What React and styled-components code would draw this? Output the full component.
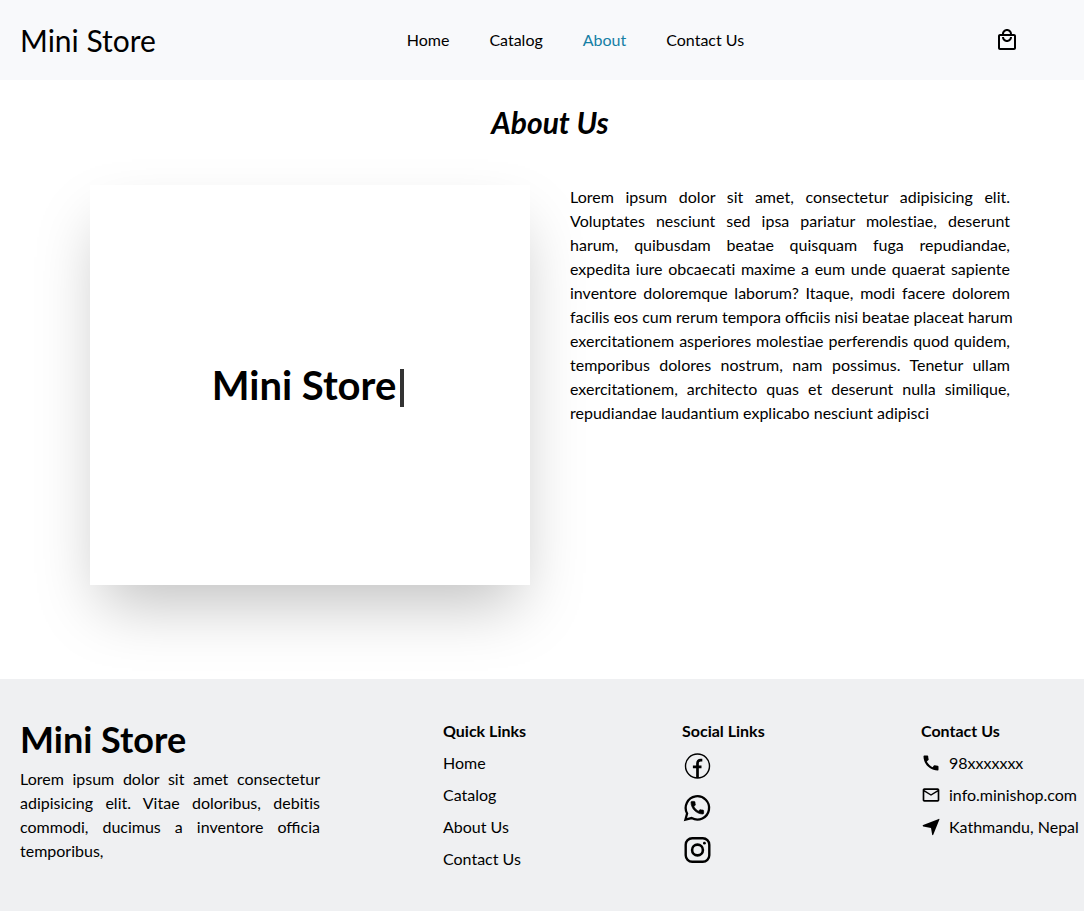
import React from "react";
import styled, { createGlobalStyle } from "styled-components";
import { MdCall, MdMailOutline, MdOutlineLocalMall } from "react-icons/md";

const GlobalStyle = createGlobalStyle`
  * { box-sizing: border-box; margin: 0; padding: 0; }
  body {
    background: #fff;
    color: #000;
    font: 400 16px/24px Lato, "Liberation Sans", sans-serif;
    overflow-x: hidden;
  }
  ul { list-style: none; }
`;

const Page = styled.div`
  display: flex;
  flex-direction: column;
  min-height: 100vh;
`;

const Header = styled.header`
  display: flex;
  align-items: center;
  justify-content: space-between;
  height: 80px;
  padding: 0 20px;
  background: #f8f9fb;
`;

const Brand = styled.a`
  color: inherit;
  font-size: 30px;
  line-height: 40px;
  text-decoration: none;
`;

const Nav = styled.nav`
  display: flex;
  gap: 40px;
`;

const TextLink = styled.a`
  color: ${({ $active }) => ($active ? "#1580a5" : "inherit")};
  text-decoration: none;
`;

const CartButton = styled.button`
  display: flex;
  margin-right: 45px;
  border: 0;
  background: none;
  color: inherit;
  font-size: 24px;
  cursor: pointer;
`;

const Main = styled.main`
  flex: 1;
  padding: 24px 74px 94px 90px;
`;

const Title = styled.h1`
  font-size: 30px;
  font-style: italic;
  font-weight: 700;
  line-height: 36px;
  text-align: center;
`;

const About = styled.section`
  display: grid;
  grid-template-columns: minmax(0, 1fr) minmax(0, 1fr);
  gap: 40px;
  margin-top: 45px;
`;

const Card = styled.div`
  display: flex;
  align-items: center;
  justify-content: center;
  min-height: 400px;
  background: #fff;
  box-shadow: 0 30px 60px -12px rgba(0, 0, 0, 0.25);
`;

const Typed = styled.h2`
  display: flex;
  align-items: center;
  gap: 4px;
  font-size: 40px;
  font-weight: 700;
  line-height: 48px;
`;

const Caret = styled.span`
  width: 4px;
  height: 38px;
  margin: 6px 4px 0 0;
  background: #333;
`;

const Copy = styled.p`
  text-align: justify;
`;

const Line = styled.span`
  display: block;
  font-variant-ligatures: ${({ $joined }) => ($joined ? "common-ligatures" : "no-common-ligatures")};
  text-align-last: justify;
  white-space: nowrap;

  &:last-child { text-align-last: left; }
`;

const Footer = styled.footer`
  display: grid;
  grid-template-columns: 423fr 239fr 239fr 163fr;
  padding: 40px 0 40px 20px;
  background: #eff0f2;
`;

const Intro = styled.div`
  max-width: 300px;
`;

const FooterBrand = styled.h2`
  margin-bottom: 8px;
  font-size: 36px;
  font-weight: 700;
  line-height: 40px;
`;

const ColumnTitle = styled.h3`
  margin-bottom: 8px;
  font-size: 16px;
  font-weight: 700;
`;

const List = styled.ul`
  display: flex;
  flex-direction: column;
  gap: 8px;
`;

const SocialList = styled(List)`
  gap: 12px;
`;

const SocialLink = styled.a`
  display: flex;
  width: 30px;
  color: inherit;
`;

const ContactItem = styled.li`
  display: flex;
  align-items: center;
  gap: 8px;
  white-space: nowrap;

  svg { width: 20px; height: 20px; flex: none; }
`;

const FacebookIcon = () => (
  <svg width="30" height="30" viewBox="0 0 30 30" fill="none" stroke="currentColor" aria-hidden="true">
    <circle cx="15.5" cy="15" r="12" strokeWidth="1.4" />
    <path d="M20.300 9.200h-1.600c-2.100 0-3.200 1.100-3.200 3.200V27M10.900 15.800h8.600" strokeWidth="2.7" />
  </svg>
);

const WhatsappIcon = () => (
  <svg width="30" height="30" viewBox="0 0 30 30" aria-hidden="true">
    <path
      d="M3.4 26.7l1.7-6.2A11.7 11.7 0 1 1 9.6 25.1z"
      fill="none"
      stroke="currentColor"
      strokeWidth="2.3"
    />
    <path
      transform="translate(6.9 6.3) scale(.7)"
      fill="currentColor"
      d="M20.010 15.380c-1.230 0-2.420-.2-3.530-.56a.977.977 0 0 0-1.010.24l-1.570 1.970c-2.830-1.350-5.480-3.900-6.890-6.830l1.950-1.660c.27-.28.35-.67.24-1.020-.37-1.110-.56-2.300-.56-3.530 0-.54-.45-.99-.99-.99H4.190C3.650 3 3 3.240 3 3.990 3 13.280 10.730 21 20.010 21c.71 0 .99-.63.99-1.180v-3.450c0-.54-.45-.99-.99-.99z"
      stroke="currentColor"
    />
  </svg>
);

const InstagramIcon = () => (
  <svg width="30" height="30" viewBox="0 0 30 30" fill="none" stroke="currentColor" aria-hidden="true">
    <rect x="3.7" y="3.2" width="23.6" height="23.6" rx="6.5" strokeWidth="2.4" />
    <circle cx="15.5" cy="15" r="5.4" strokeWidth="2.6" />
    <circle cx="22.400" cy="8.200" r="1.400" fill="currentColor" stroke="none" />
  </svg>
);

const LocationIcon = () => (
  <svg viewBox="0 0 24 24" fill="currentColor" aria-hidden="true">
    <path d="M21.300 2.300c.6-.2 1 .2.800.8l-7.400 18.200c-.3.700-1.200.6-1.300-.1L12 13.200 2.700 11.300c-.9-.2-.9-1.300-.1-1.600z" />
  </svg>
);

const pages = ["Home", "Catalog", "About", "Contact Us"];
const quickLinks = ["Home", "Catalog", "About Us", "Contact Us"];

const aboutCopy = [
  "Lorem ipsum dolor sit amet, consectetur adipisicing elit.",
  "Voluptates nesciunt sed ipsa pariatur molestiae, deserunt",
  "harum, quibusdam beatae quisquam fuga repudiandae,",
  "expedita iure obcaecati maxime a eum unde quaerat sapiente",
  "inventore doloremque laborum? Itaque, modi facere dolorem",
  "facilis eos cum rerum tempora officiis nisi beatae placeat harum",
  "exercitationem asperiores molestiae perferendis quod quidem,",
  "temporibus dolores nostrum, nam possimus. Tenetur ullam",
  "exercitationem, architecto quas et deserunt nulla similique,",
  "repudiandae laudantium explicabo nesciunt adipisci",
];

const footerCopy = [
  "Lorem ipsum dolor sit amet consectetur",
  "adipisicing elit. Vitae doloribus, debitis",
  "commodi, ducimus a inventore officia",
  "temporibus,",
];

const Justified = ({ lines }) => (
  <Copy>
    {lines.map((line) => (
      <Line key={line} $joined={line.includes("ffi")}>{line} </Line>
    ))}
  </Copy>
);

export default function App() {
  return (
    <Page>
      <GlobalStyle />
      <Header>
        <Brand href="#home">Mini Store</Brand>
        <Nav aria-label="Main">
          {pages.map((p) => (
            <TextLink key={p} href="#page" $active={p === "About"}>{p}</TextLink>
          ))}
        </Nav>
        <CartButton aria-label="Cart"><MdOutlineLocalMall /></CartButton>
      </Header>
      <Main>
        <Title>About Us</Title>
        <About>
          <Card>
            <Typed>Mini Store<Caret /></Typed>
          </Card>
          <Justified lines={aboutCopy} />
        </About>
      </Main>
      <Footer>
        <Intro>
          <FooterBrand>Mini Store</FooterBrand>
          <Justified lines={footerCopy} />
        </Intro>
        <div>
          <ColumnTitle>Quick Links</ColumnTitle>
          <List>
            {quickLinks.map((l) => (
              <li key={l}><TextLink href="#page">{l}</TextLink></li>
            ))}
          </List>
        </div>
        <div>
          <ColumnTitle>Social Links</ColumnTitle>
          <SocialList>
            <li><SocialLink href="#facebook" aria-label="Facebook"><FacebookIcon /></SocialLink></li>
            <li><SocialLink href="#whatsapp" aria-label="WhatsApp"><WhatsappIcon /></SocialLink></li>
            <li><SocialLink href="#instagram" aria-label="Instagram"><InstagramIcon /></SocialLink></li>
          </SocialList>
        </div>
        <div>
          <ColumnTitle>Contact Us</ColumnTitle>
          <List>
            <ContactItem><MdCall />98xxxxxxx</ContactItem>
            <ContactItem><MdMailOutline />info.minishop.com</ContactItem>
            <ContactItem><LocationIcon />Kathmandu, Nepal</ContactItem>
          </List>
        </div>
      </Footer>
    </Page>
  );
}
